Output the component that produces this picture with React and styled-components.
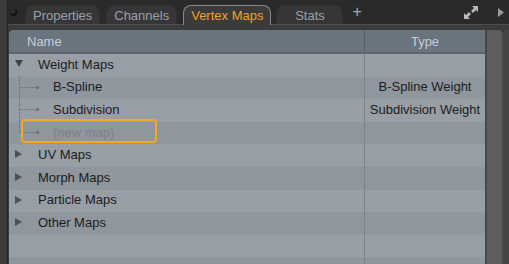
import React from "react";
import styled, { createGlobalStyle } from "styled-components";

const Global = createGlobalStyle`
  html, body {
    margin: 0;
    padding: 0;
    background: #2b2b2b;
    font-family: "Liberation Sans", Arial, sans-serif;
  }
`;

const Frame = styled.div`
  display: flex;
  width: 509px;
  height: 264px;
  overflow: hidden;
  background: #3b3b3b;
`;

const LeftStrip = styled.div`
  width: 7px;
  background: #3a3a3a;
  border-right: 1px solid #242424;
  flex-shrink: 0;
`;

const Main = styled.div`
  flex: 1;
  display: flex;
  flex-direction: column;
  min-width: 0;
`;

const TabBar = styled.div`
  height: 24px;
  flex-shrink: 0;
  display: flex;
  align-items: flex-end;
  background: #2a2a2a;
  border-bottom: 1px solid #4f4f4f;
  padding-left: 2px;
`;

const Dot = styled.div`
  width: 7px;
  height: 7px;
  border-radius: 50%;
  background: radial-gradient(circle at 40% 35%, #3a3a3a, #0c0c0c 70%);
  align-self: flex-start;
  margin: 9px 8px 0 0;
`;

const Tab = styled.div`
  margin-right: ${(p) => (p.$active ? "5px" : "6px")};
  min-width: ${(p) => p.$min || 0}px;
  box-sizing: border-box;
  padding: 0 7px;
  display: flex;
  align-items: center;
  justify-content: center;
  font-size: 13px;
  color: ${(p) => (p.$active ? "#f2a12a" : "#9aa1aa")};
  background: ${(p) => (p.$active ? "#3b3b3b" : "#363636")};
  border-radius: 8px 8px 0 0;
  border: 1px solid ${(p) => (p.$active ? "#8b8b8b" : "#303030")};
  border-bottom: none;
  margin-bottom: ${(p) => (p.$active ? "-1px" : "0")};
  height: ${(p) => (p.$active ? "20px" : "19px")};
`;

const Plus = styled.div`
  color: #a9a9a9;
  font-size: 16px;
  line-height: 16px;
  margin: 0 0 4px 3px;
`;

const Corner = styled.div`
  margin-left: auto;
  align-self: center;
  display: flex;
  align-items: center;
  gap: 19px;
  padding-right: 5px;
`;

const Body = styled.div`
  flex: 1;
  display: flex;
  padding-top: 5px;
  padding-left: 1px;
  min-height: 0;
`;

const Table = styled.div`
  flex: 1;
  display: flex;
  flex-direction: column;
  border-radius: 5px 0 0 0;
  overflow: hidden;
  background: #8f969d;
`;

const Header = styled.div`
  display: grid;
  grid-template-columns: 356px 1fr;
  height: 22px;
  flex-shrink: 0;
  background: #6a747f;
  border-bottom: 2px solid #5d656e;
  color: #c6ced6;
  font-size: 13px;
`;

const HeadCell = styled.div`
  display: flex;
  align-items: center;
  padding-left: ${(p) => (p.$center ? 0 : "18px")};
  justify-content: ${(p) => (p.$center ? "center" : "flex-start")};
  border-right: ${(p) => (p.$divider ? "1px solid #56606a" : "none")};
`;

const Row = styled.div`
  display: grid;
  grid-template-columns: 356px 1fr;
  height: 22.6px;
  background: ${(p) => (p.$odd ? "#8f969d" : "#979ea5")};
  font-size: 13px;
  color: #1c1c1e;
  flex-shrink: 0;
`;

const NameCell = styled.div`
  display: flex;
  align-items: center;
  position: relative;
  box-sizing: border-box;
  padding-bottom: 2px;
  border-right: 1px solid #7b838b;
  padding-left: ${(p) => p.$indent}px;
`;

const TypeCell = styled.div`
  display: flex;
  align-items: center;
  justify-content: center;
  padding-bottom: 2px;
`;

const Toggle = styled.svg`
  position: absolute;
  left: 5px;
  top: 5px;
`;

const Guide = styled.svg`
  position: absolute;
  left: 8px;
  top: -1px;
`;

const Label = styled.span`
  color: ${(p) => (p.$muted ? "#7a828a" : "inherit")};
`;

const NewMapBox = styled.div`
  position: absolute;
  left: 12px;
  top: -3px;
  width: 136px;
  height: 24px;
  box-sizing: border-box;
  border: 2px solid #f5a623;
  border-radius: 4px;
`;

const Scroll = styled.div`
  width: 15px;
  background: #5e5e5e;
  border-left: 2px solid #474747;
  border-right: 2px solid #474747;
  border-radius: 0 5px 0 0;
  flex-shrink: 0;
`;

const RightStrip = styled.div`
  width: 5px;
  background: #444;
  flex-shrink: 0;
`;

function TreeToggle({ open }) {
  return (
    <Toggle width="10" height="10" viewBox="0 0 10 10">
      {open ? (
        <path d="M1 1 H9 L5 8 Z" fill="#3d4348" />
      ) : (
        <path d="M1 1 L8 5 L1 9 Z" fill="#4a5056" />
      )}
    </Toggle>
  );
}

function TreeGuide({ last }) {
  return (
    <Guide width="30" height="24" viewBox="0 0 30 24">
      <line
        x1="2.5"
        y1="0"
        x2="2.5"
        y2={last ? 11.5 : 24}
        stroke="#646c74"
        strokeDasharray="1 1"
      />
      <line x1="3" y1="11.5" x2="19" y2="11.5" stroke="#646c74" strokeDasharray="1 1" />
      <rect x="19" y="10" width="3" height="3" fill="#6c747c" />
    </Guide>
  );
}

const rows = [
  { name: "Weight Maps", group: true, open: true },
  { name: "B-Spline", type: "B-Spline Weight" },
  { name: "Subdivision", type: "Subdivision Weight" },
  { name: "(new map)", muted: true, last: true },
  { name: "UV Maps", group: true },
  { name: "Morph Maps", group: true },
  { name: "Particle Maps", group: true },
  { name: "Other Maps", group: true },
  { name: "" },
  { name: "" },
];

export default function App() {
  return (
    <Frame>
      <Global />
      <LeftStrip />
      <Main>
        <TabBar>
          <Dot />
          <Tab>Properties</Tab>
          <Tab>Channels</Tab>
          <Tab $active>Vertex Maps</Tab>
          <Tab $min={67}>Stats</Tab>
          <Plus>+</Plus>
          <Corner>
            <svg width="16" height="15" viewBox="0 0 16 15">
              <path d="M9 1 H15 V7 L13 5 L10 8 L8 6 L11 3 Z" fill="#b9b9b9" />
              <path d="M1 8 V14 H7 L5 12 L8 9 L6 7 L3 10 Z" fill="#b9b9b9" />
            </svg>
            <svg width="6" height="9" viewBox="0 0 6 9">
              <path d="M0 0 L6 4.5 L0 9 Z" fill="#9a9a9a" />
            </svg>
          </Corner>
        </TabBar>
        <Body>
          <Table>
            <Header>
              <HeadCell $divider>Name</HeadCell>
              <HeadCell $center>Type</HeadCell>
            </Header>
            {rows.map((r, i) => (
              <Row key={i} $odd={i % 2 === 1}>
                <NameCell $indent={r.group ? 29 : 44}>
                  {r.group && <TreeToggle open={r.open} />}
                  {!r.group && r.name && <TreeGuide last={r.last} />}
                  {r.muted && <NewMapBox />}
                  <Label $muted={r.muted}>{r.name}</Label>
                </NameCell>
                <TypeCell>{r.type}</TypeCell>
              </Row>
            ))}
          </Table>
          <Scroll />
          <RightStrip />
        </Body>
      </Main>
    </Frame>
  );
}
